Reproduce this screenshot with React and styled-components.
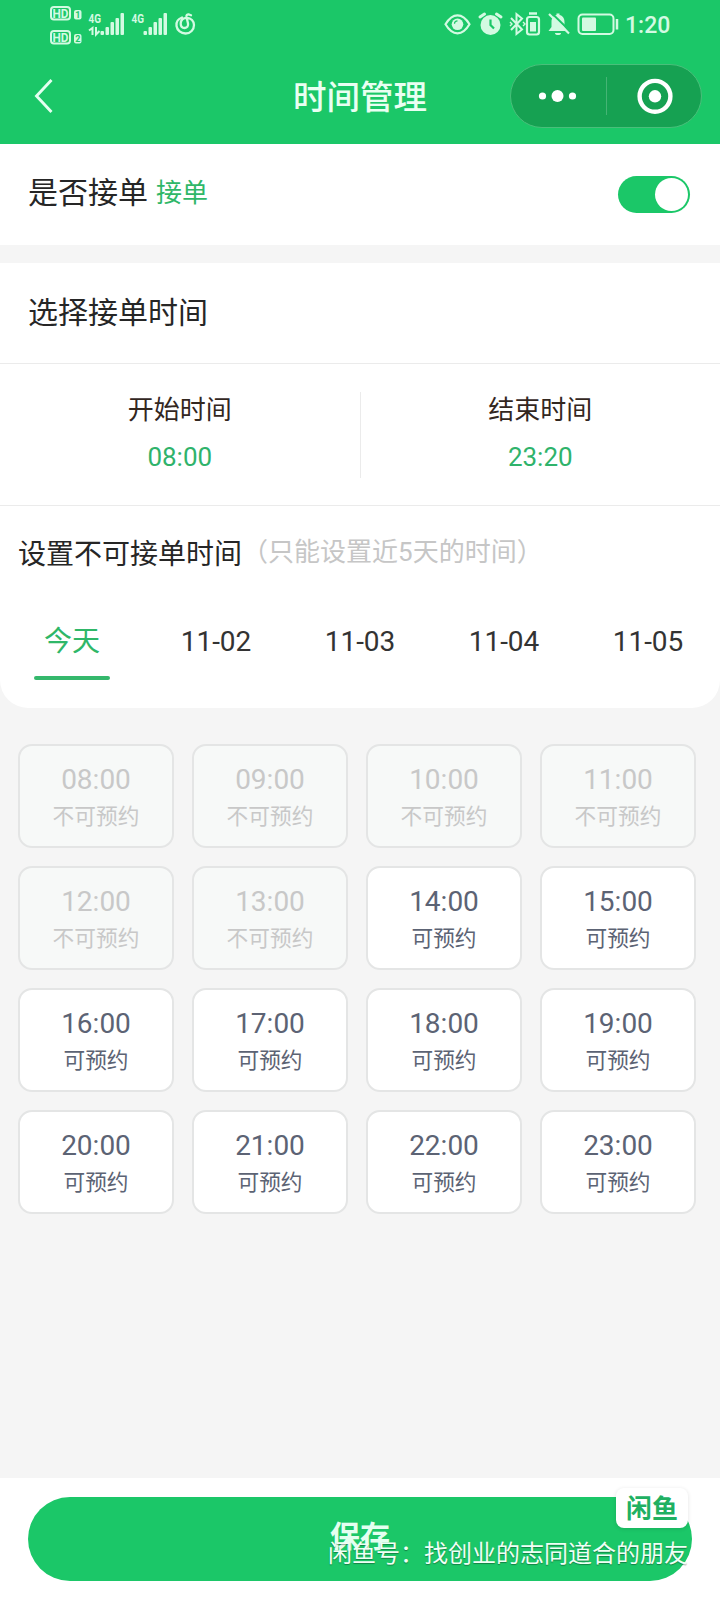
import React, { useState } from 'react';
import styled, { createGlobalStyle } from 'styled-components';

const GREEN = '#1bc768';

const allSlots = [
	'08:00', '09:00', '10:00', '11:00',
	'12:00', '13:00', '14:00', '15:00',
	'16:00', '17:00', '18:00', '19:00',
	'20:00', '21:00', '22:00', '23:00',
];
const days = ['今天', '11-02', '11-03', '11-04', '11-05'];

const GlobalStyle = createGlobalStyle`
	* {
		box-sizing: border-box;
	}
	body {
		margin: 0;
		background: #f5f5f5;
		font-family: Roboto, 'Noto Sans CJK SC', sans-serif;
		color: #262626;
	}
	button {
		font: inherit;
		border: 0;
		padding: 0;
		background: none;
	}
`;

const SignalIcons = () => (
	<svg width='160' height='48' viewBox='0 0 160 48' fill='#d3fae2'>
		<g fontFamily='Roboto, sans-serif' fontWeight='700'>
			<g fill='none' stroke='#d3fae2' strokeWidth='2'>
				<rect x='6' y='7' width='19' height='12.500' rx='3' />
				<rect x='6' y='31' width='19' height='12.500' rx='3' />
			</g>
			<text x='7.500' y='18' fontSize='13.500' textLength='16' lengthAdjust='spacingAndGlyphs'>HD</text>
			<text x='7.500' y='42' fontSize='13.500' textLength='16' lengthAdjust='spacingAndGlyphs'>HD</text>
			<rect x='29' y='10' width='7.500' height='9.500' rx='2' />
			<rect x='29' y='34' width='7.500' height='9.500' rx='2' />
			<g fill={GREEN}>
				<text x='30.300' y='18' fontSize='9'>1</text>
				<text x='30.300' y='42' fontSize='9'>2</text>
			</g>
			<text x='43.500' y='23' fontSize='13.500' textLength='12.500' lengthAdjust='spacingAndGlyphs'>4G</text>
			<text x='86.500' y='23' fontSize='13.500' textLength='12.500' lengthAdjust='spacingAndGlyphs'>4G</text>
		</g>
		<path d='M44 30.500l3.500-2.500v7M51 27v7.500l3.500-3.500' fill='none' stroke='#d3fae2' strokeWidth='2' />
		{[0, 43].map((dx) => (
			<g key={dx} transform={`translate(${dx} 0)`}>
				<rect x='55.500' y='31' width='3.500' height='4' rx='1' />
				<rect x='60.500' y='27' width='3.500' height='8' rx='1' />
				<rect x='65.500' y='22' width='3.500' height='13' rx='1' />
				<rect x='70.500' y='18' width='3.500' height='17' rx='1' />
				<rect x='75.500' y='13' width='3.500' height='22' rx='1' />
			</g>
		))}
		<path
			d='M137 17.500c-4 1.500-6 5-5.500 8.500.7 4.500 4.500 7.500 9 7.500 5 0 8.500-4 8.500-8.500 0-4-3-7-7-7.200-4-.1-6.300 2.500-6.300 5.700 0 2.800 1.800 4.500 4 4.500 2.500 0 3.800-2 3.300-4.500l-1.500-6.500c-.4-2 .8-2.800 2.500-2.500l2 .8'
			fill='none'
			stroke='#d3fae2'
			strokeWidth='2.300'
			strokeLinecap='round'
		/>
	</svg>
);

const DeviceIcons = () => (
	<svg width='176' height='48' viewBox='0 0 176 48' fill='none' stroke='#d3fae2' strokeWidth='2.200'>
		{/* eye */}
		<path d='M1.500 24.300c7-12 17-12 24 0c-7 12-17 12-24 0z' />
		<circle cx='13.500' cy='24.300' r='5.800' fill='#d3fae2' stroke='none' />
		<path d='M10.500 23.800a3 3 0 0 1 3-3' stroke={GREEN} strokeWidth='1.200' />
		{/* alarm */}
		<circle cx='46.500' cy='25' r='10' fill='#d3fae2' stroke='none' />
		<path d='M36 17l4.500-3M57 17l-4.500-3' strokeWidth='3' strokeLinecap='round' />
		<path d='M46.500 19.500v5.500l3.500 3.500' stroke={GREEN} />
		{/* bluetooth */}
		<path d='M67 18l11 11.500-5.500 4.500V14l5.500 4.500L67 30' strokeWidth='2' />
		<path d='M66 22l2 2-2 2M79 22l2 2-2 2' strokeWidth='1.400' />
		<rect x='83' y='17' width='12' height='17.500' rx='2.500' />
		<path d='M85 13.500h8' strokeWidth='2.500' />
		<rect x='86' y='22' width='6' height='9.500' fill='#d3fae2' stroke='none' />
		{/* muted bell */}
		<path
			d='M104.500 31h19l-3-4v-5c0-4-2-6.500-5-7v-1.500h-3V15c-3 .5-5 3-5 7v5zM111 33h6a3 2 0 0 1-6 0z'
			fill='#d3fae2'
			stroke='none'
		/>
		<path d='M107 12.500L127 32' stroke={GREEN} strokeWidth='2' />
		<path d='M105 14L125 33.500' />
		{/* battery */}
		<rect x='134.500' y='14.500' width='35' height='19.500' rx='4' strokeWidth='2' />
		<rect x='138' y='17.500' width='14' height='13.500' rx='1' fill='#d3fae2' stroke='none' />
		<path d='M173 19v10.500' strokeWidth='2.500' />
	</svg>
);

const App = () => {
	const [accepting, setAccepting] = useState(true);
	const [activeDay, setActiveDay] = useState(0);

	return (
		<Page>
			<GlobalStyle />
			<StatusBar>
				<SignalIcons />
				<StatusRight>
					<DeviceIcons />
					<Clock>1:20</Clock>
				</StatusRight>
			</StatusBar>
			<NavBar>
				<Back aria-label='返回'>
					<svg width='20' height='36' viewBox='0 0 20 36' fill='none' stroke='#e4fff0' strokeWidth='2.900'>
						<path d='M17.500 2L2.500 18l15 16' />
					</svg>
				</Back>
				<Title>时间管理</Title>
				<Capsule>
					<svg width='95' height='62' viewBox='0 0 95 62' fill='#fff'>
						<circle cx='31.500' cy='31' r='3.600' />
						<circle cx='46.500' cy='31' r='6' />
						<circle cx='61.500' cy='31' r='3.600' />
					</svg>
					<CapsuleLine />
					<svg width='94' height='62' viewBox='0 0 94 62' fill='#fff'>
						<circle cx='48' cy='31.300' r='6.200' />
						<circle cx='48' cy='31.300' r='15.400' fill='none' stroke='#fff' strokeWidth='4.400' />
					</svg>
				</Capsule>
			</NavBar>

			<AcceptRow>
				<span>是否接单</span>
				<AcceptState>{accepting ? '接单' : '休息'}</AcceptState>
				<Switch $on={accepting} onClick={() => setAccepting(!accepting)} aria-label='是否接单'>
					<Knob />
				</Switch>
			</AcceptRow>

			<Panel>
				<PanelHead>选择接单时间</PanelHead>
				<Range>
					<RangeItem>
						<RangeLabel>开始时间</RangeLabel>
						<RangeValue>08:00</RangeValue>
					</RangeItem>
					<RangeLine />
					<RangeItem>
						<RangeLabel>结束时间</RangeLabel>
						<RangeValue>23:20</RangeValue>
					</RangeItem>
				</Range>
				<BlockHead>
					<span>设置不可接单时间</span>
					<BlockHint>（只能设置近5天的时间）</BlockHint>
				</BlockHead>
				<Tabs>
					{days.map((day, i) => (
						<Tab key={day} $active={i === activeDay} onClick={() => setActiveDay(i)}>
							{day}
						</Tab>
					))}
				</Tabs>
			</Panel>

			<Slots>
				{allSlots.map((time, i) => (
					<Slot key={time} disabled={i < 6}>
						<SlotTime>{time}</SlotTime>
						<SlotState>{i < 6 ? '不可预约' : '可预约'}</SlotState>
					</Slot>
				))}
			</Slots>

			<Footer>
				<Save>保存</Save>
				<Badge>闲鱼</Badge>
				<Seller>闲鱼号：找创业的志同道合的朋友</Seller>
			</Footer>
		</Page>
	);
};

export default App;

const Page = styled.div`
	width: 720px;
	height: 1600px;
	display: flex;
	flex-direction: column;
	overflow: hidden;
`;

const StatusBar = styled.div`
	height: 48px;
	padding: 0 51px 0 45px;
	display: flex;
	justify-content: space-between;
	background: ${GREEN};
	flex: none;
`;

const StatusRight = styled.div`
	display: flex;
	align-items: center;
	gap: 5px;
`;

const Clock = styled.span`
	width: 44px;
	padding-top: 3px;
	font-size: 23px;
	line-height: 47px;
	font-weight: 500;
	color: #d3fae2;
	white-space: nowrap;
`;

const NavBar = styled.header`
	height: 96px;
	padding: 0 18px 0 34px;
	display: grid;
	grid-template-columns: 193px 1fr 193px;
	align-items: center;
	background: ${GREEN};
	flex: none;
`;

const Back = styled.button`
	display: flex;
`;

const Title = styled.h1`
	margin: 3px 0 0;
	padding-left: 66px;
	font-size: 33.500px;
	line-height: 50px;
	font-weight: 500;
	color: #e9fff2;
	white-space: nowrap;
`;

const Capsule = styled.div`
	width: 192px;
	height: 64px;
	margin-left: 1px;
	display: flex;
	align-items: center;
	border: 1px solid #49bf7a;
	border-radius: 32px;
	background: #16a152;
`;

const CapsuleLine = styled.div`
	width: 1px;
	height: 38px;
	background: #45b475;
`;

const AcceptRow = styled.section`
	height: 101px;
	padding: 0 30px 0 28px;
	display: flex;
	align-items: center;
	background: #fff;
	font-size: 30px;
	line-height: 44px;
	margin-bottom: 18px;
	flex: none;

	> span {
		padding-bottom: 4px;
	}
`;

const AcceptState = styled.span`
	margin-left: 8px;
	font-size: 26px;
	color: #2fb768;
`;

const Switch = styled.button`
	width: 72px;
	height: 37px;
	padding: 2px;
	margin-left: auto;
	display: flex;
	justify-content: ${(props) => (props.$on ? 'flex-end' : 'flex-start')};
	border-radius: 19px;
	background: ${(props) => (props.$on ? GREEN : '#ddd')};
`;

const Knob = styled.span`
	width: 33px;
	height: 33px;
	border-radius: 50%;
	background: #fff;
`;

const Panel = styled.section`
	height: 445px;
	border-radius: 0 0 28px 28px;
	background: #fff;
	flex: none;
`;

const PanelHead = styled.div`
	height: 101px;
	padding-left: 28px;
	font-size: 30px;
	line-height: 99px;
	border-bottom: 1px solid #ebebeb;
`;

const Range = styled.div`
	height: 142px;
	display: flex;
	align-items: center;
	border-bottom: 1px solid #ebebeb;
`;

const RangeItem = styled.div`
	flex: 1;
	display: flex;
	flex-direction: column;
	align-items: center;
	gap: 8px;
	padding-bottom: 2px;
	font-size: 26px;
	line-height: 39px;
`;

const RangeLine = styled.div`
	width: 1px;
	height: 86px;
	background: #ebebeb;
`;

const RangeLabel = styled.span`
	color: #33271f;
`;

const RangeValue = styled.span`
	color: #2fb36b;
`;

const BlockHead = styled.div`
	height: 97px;
	padding-left: 18px;
	display: flex;
	font-size: 28px;
	line-height: 98px;
`;

const BlockHint = styled.span`
	font-size: 26px;
	line-height: 93px;
	color: #c6c6c6;
`;

const Tabs = styled.div`
	display: grid;
	grid-template-columns: repeat(5, 1fr);
`;

const Tab = styled.button`
	height: 78px;
	padding-top: 3px;
	display: flex;
	flex-direction: column;
	align-items: center;
	font-size: 28px;
	line-height: 72px;
	color: ${(props) => (props.$active ? '#2fb768' : '#333')};

	&::after {
		content: '';
		width: 76px;
		height: 4px;
		margin-top: -2px;
		border-radius: 2px;
		background: ${(props) => (props.$active ? '#35b86c' : 'transparent')};
	}
`;

const Slots = styled.section`
	padding: 36px 18px 0;
	display: grid;
	grid-template-columns: repeat(4, 156px);
	grid-auto-rows: 104px;
	gap: 18px;
`;

const Slot = styled.button`
	display: flex;
	flex-direction: column;
	align-items: center;
	padding-top: 14px;
	border: 2px solid #e4e5e5;
	border-radius: 14px;
	background: ${(props) => (props.disabled ? '#f7f9f8' : '#fff')};
	color: ${(props) => (props.disabled ? '#c8c8c8' : '#5c6374')};
`;

const SlotTime = styled.span`
	font-size: 28px;
	line-height: 40px;
`;

const SlotState = styled.span`
	font-size: 21.700px;
	line-height: 34px;
`;

const Footer = styled.footer`
	position: relative;
	height: 122px;
	margin-top: auto;
	padding: 19px 28px;
	background: #fff;
	flex: none;
`;

const Save = styled.button`
	display: block;
	width: 664px;
	height: 84px;
	padding-bottom: 10px;
	border-radius: 42px;
	background: ${GREEN};
	font-size: 30px;
	font-weight: 700;
	color: #e4fff0;
`;

const Badge = styled.div`
	position: absolute;
	top: 10px;
	right: 32px;
	width: 72px;
	height: 40px;
	border-radius: 8px;
	background: #fff;
	box-shadow: 0 1px 4px rgba(0, 0, 0, 0.12);
	font-size: 26px;
	line-height: 42px;
	font-weight: 700;
	text-align: center;
	color: #20b062;
`;

const Seller = styled.div`
	position: absolute;
	top: 58px;
	right: 32px;
	font-size: 24px;
	line-height: 36px;
	color: #effff5;
	text-shadow: 0 1px 1px rgba(0, 0, 0, 0.35);
	white-space: nowrap;
`;
